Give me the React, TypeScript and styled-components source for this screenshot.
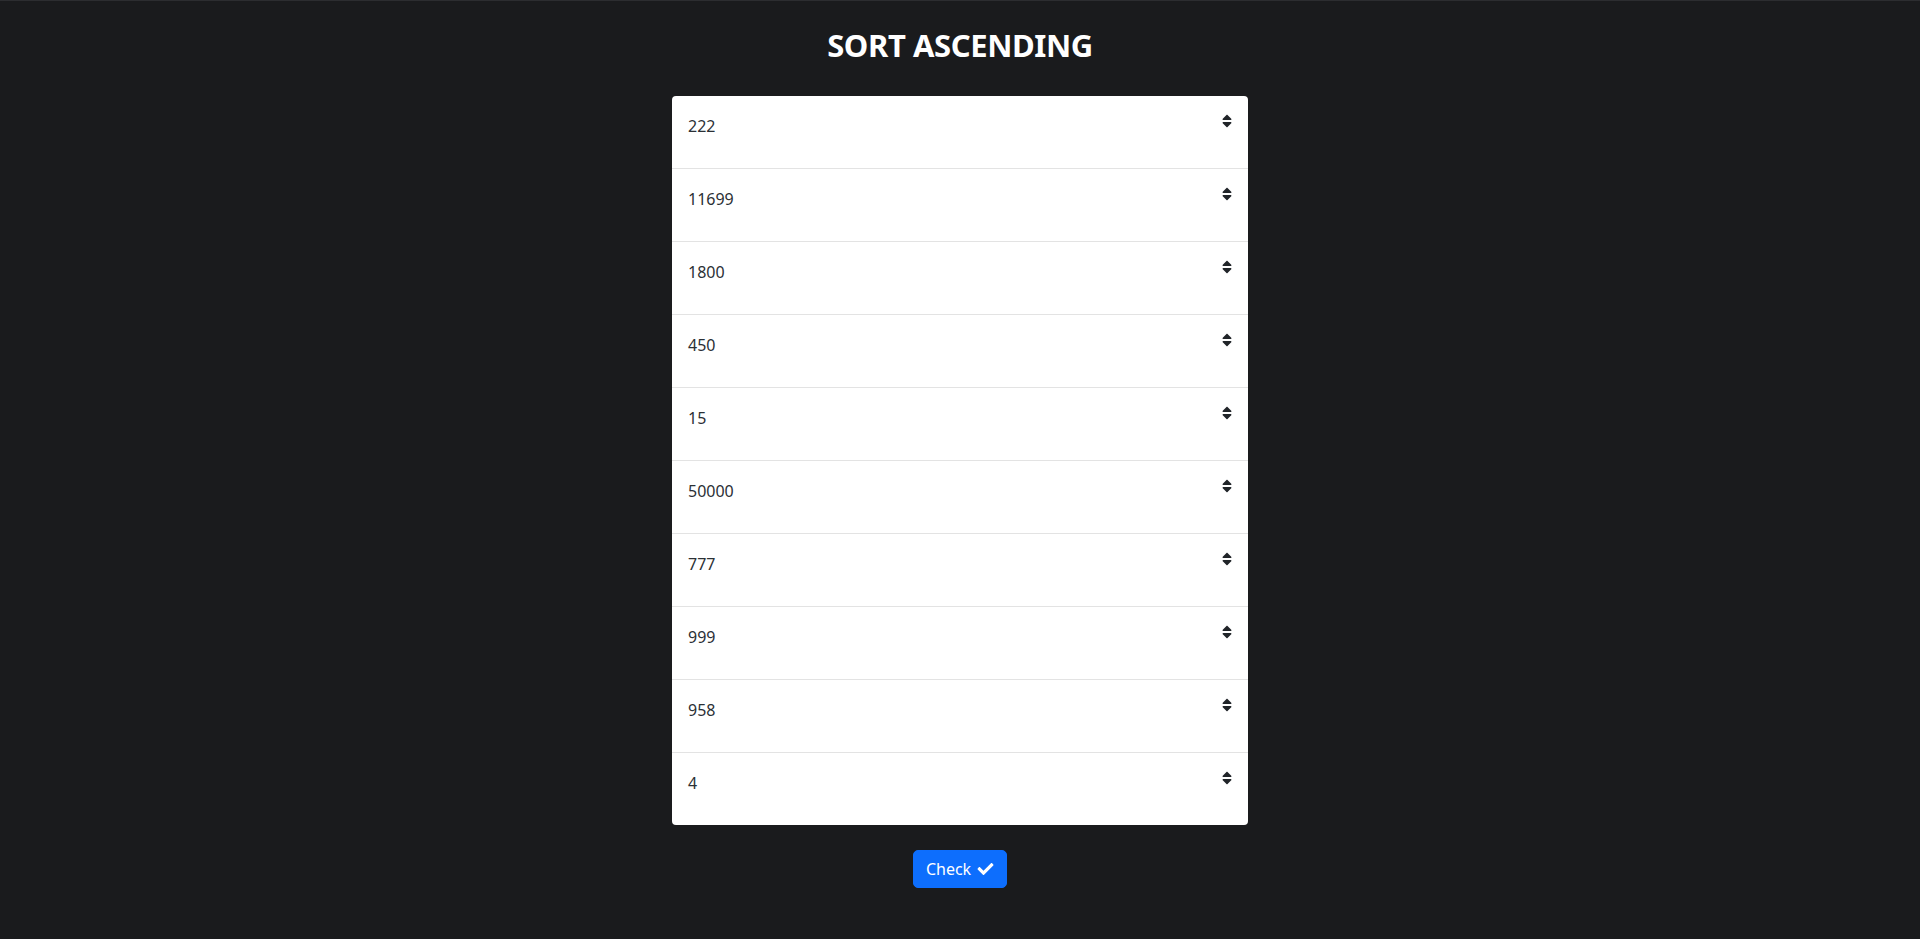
import React from "react";
import styled, { createGlobalStyle } from "styled-components";

const Global = createGlobalStyle`
  html, body { margin: 0; padding: 0; }
  body {
    background: #1a1b1d;
    border-top: 1px solid #2c2d30;
    font-family: "Noto Sans", "Open Sans", "Liberation Sans", sans-serif;
    min-height: 938px;
  }
`;

const Page = styled.main`
  display: flex;
  flex-direction: column;
  align-items: center;
  padding-top: 25px;
`;

const Title = styled.h2`
  margin: 0 0 32px;
  font-size: 31px;
  line-height: 38px;
  font-weight: 700;
  color: #ffffff;
  letter-spacing: -0.4px;
`;

const List = styled.ul`
  list-style: none;
  margin: 0;
  padding: 0;
  width: 576px;
  background: #fff;
  border-radius: 4px;
  overflow: hidden;
`;

const Item = styled.li`
  display: flex;
  justify-content: space-between;
  align-items: flex-start;
  padding: 16px 16px 32px;
  border-top: 1px solid #e3e3e3;
  font-size: 16px;
  line-height: 24px;
  color: #2b3035;
  &:first-child { border-top: none; }
`;

const Value = styled.span`
  margin-top: 2px;
  margin-bottom: -2px;
`;

const SortIcon = styled.svg`
  width: 10px;
  height: 16px;
  margin-top: 1px;
  fill: #212529;
`;

const Button = styled.button`
  margin-top: 25px;
  display: inline-flex;
  align-items: center;
  gap: 6px;
  height: 38px;
  padding: 0 12px 0 12px;
  border: 1px solid #0d6efd;
  border-radius: 5px;
  background: #0d6efd;
  color: #fff;
  font-family: inherit;
  font-size: 16px;
  line-height: 24px;
  cursor: pointer;
`;

const CheckIcon = styled.svg`
  width: 17px;
  height: 16px;
  fill: #fff;
`;

const values = [222, 11699, 1800, 450, 15, 50000, 777, 999, 958, 4];

export default function App() {
  return (
    <>
      <Global />
      <Page>
        <Title>SORT ASCENDING</Title>
        <List>
          {values.map((v) => (
            <Item key={v}>
              <Value>{v}</Value>
              <SortIcon viewBox="0 0 320 512">
                <path d="M41 288h238c21.4 0 32.1 25.9 17 41L177 448c-9.4 9.4-24.6 9.4-33.9 0L24 329c-15.1-15.1-4.4-41 17-41zm255-105L177 64c-9.4-9.4-24.6-9.4-33.9 0L24 183c-15.1 15.1-4.4 41 17 41h238c21.4 0 32.1-25.9 17-41z" />
              </SortIcon>
            </Item>
          ))}
        </List>
        <Button>
          Check
          <CheckIcon viewBox="0 0 512 512">
            <path d="M173.9 439.4l-166.4-166.4c-10-10-10-26.2 0-36.2l36.2-36.2c10-10 26.2-10 36.2 0L192 312.7 432.1 72.6c10-10 26.2-10 36.2 0l36.2 36.2c10 10 10 26.2 0 36.2L210.1 439.4c-10 10-26.2 10-36.2 0z" />
          </CheckIcon>
        </Button>
      </Page>
    </>
  );
}
